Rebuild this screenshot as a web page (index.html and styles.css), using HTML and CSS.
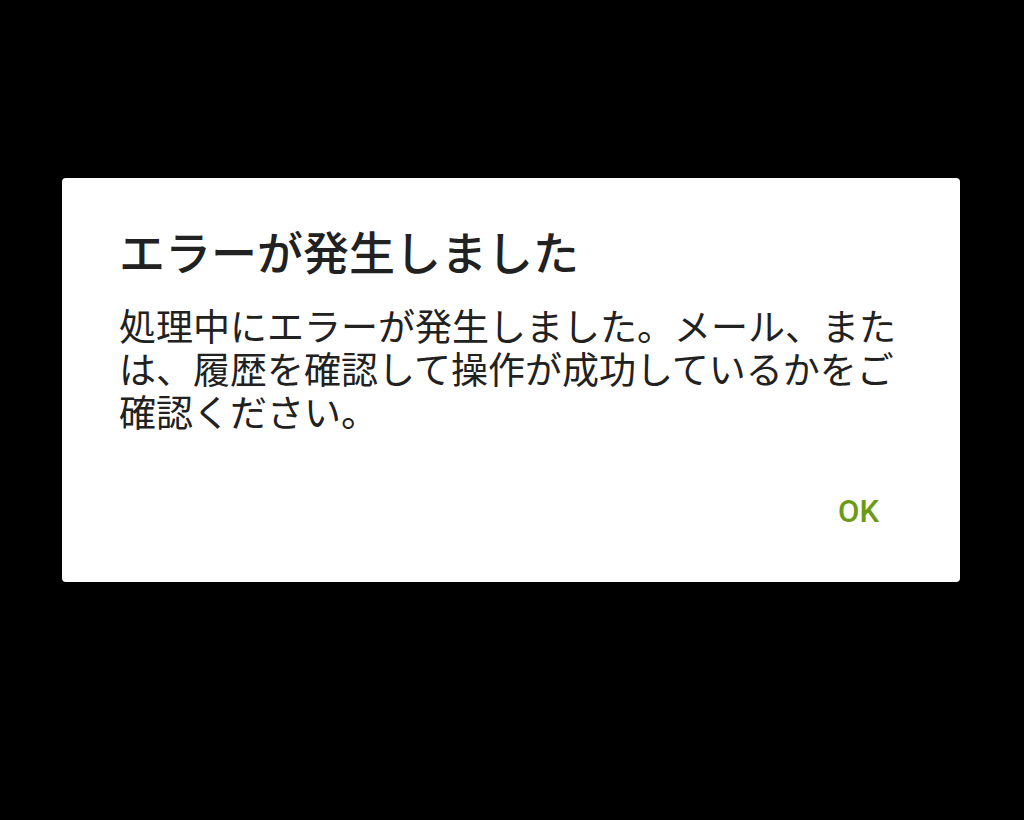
FILE: index.html
```html
<!DOCTYPE html>
<html lang="ja">
<head>
  <meta charset="UTF-8" />
  <meta name="viewport" content="width=device-width, initial-scale=1.0"/>
  <title>エラー</title>
  <link rel="stylesheet" href="styles.css">
</head>
<body>
  <div class="overlay">
    <div class="dialog">
      <h1 class="dialog-title">エラーが発生しました</h1>
      <p class="dialog-message">処理中にエラーが発生しました。メール、または、履歴を確認して操作が成功しているかをご確認ください。</p>
      <div class="dialog-actions">
        <button class="btn-ok">OK</button>
      </div>
    </div>
  </div>
</body>
</html>
```

FILE: styles.css
```css
* {
  box-sizing: border-box;
}

body {
  margin: 0;
  background: #000;
  font-family: "Noto Sans CJK JP", "Noto Sans", sans-serif;
}

.overlay {
  width: 1024px;
  height: 820px;
  padding: 178px 64px 0 62px;
}

.dialog {
  width: 898px;
  height: 404px;
  background: #fff;
  border-radius: 4px;
  padding: 34px 57px 0 57px;
  display: flex;
  flex-direction: column;
}

.dialog-title {
  margin: 0;
  font-size: 46px;
  font-weight: 500;
  line-height: 76px;
  color: #212121;
}

.dialog-message {
  margin: 16px 0 0;
  font-size: 37px;
  font-weight: 400;
  line-height: 43px;
  color: #212121;
}

.dialog-actions {
  display: flex;
  justify-content: flex-end;
  margin-top: 52px;
}

.btn-ok {
  border: none;
  background: transparent;
  padding: 8px 24px;
  margin-right: 0;
  font-family: Roboto, "Noto Sans", sans-serif;
  font-size: 31px;
  font-weight: 500;
  color: #6b9b14;
  cursor: pointer;
}
```
